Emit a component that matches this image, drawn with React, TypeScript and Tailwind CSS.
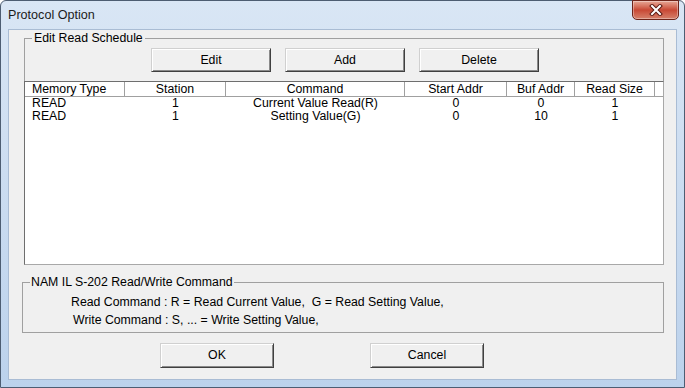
import React from 'react';

const cols = [
    { title: 'Memory Type', width: 'w-[100px]', align: 'text-left pl-[7px]' },
    { title: 'Station', width: 'w-[101px]', align: 'text-center' },
    { title: 'Command', width: 'w-[179px]', align: 'text-center' },
    { title: 'Start Addr', width: 'w-[102px]', align: 'text-center' },
    { title: 'Buf Addr', width: 'w-[68px]', align: 'text-center' },
    { title: 'Read Size', width: 'w-[80px]', align: 'text-center' },
];

const rows = [
    ['READ', '1', 'Current Value Read(R)', '0', '0', '1'],
    ['READ', '1', 'Setting Value(G)', '0', '10', '1'],
];

function Button({ label, className }: { label: string; className: string }) {
    return (
        <button
            type="button"
            className={`${className} flex items-center justify-center bg-[#f0f0f0] border border-t-[#d0d0d0] border-l-[#d0d0d0] border-r-[#404040] border-b-[#404040] shadow-[inset_1px_1px_0_#ffffff,inset_-1px_-1px_0_#8a8a8a] text-black`}
        >
            {label}
        </button>
    );
}

export default function App() {
    return (
        <div
            className="w-[685px] h-[388px] flex flex-col px-[7px] pb-[7px] bg-gradient-to-b from-[#d9e6f5] to-[#bcd2ec] border border-[#4d5d72] rounded-t-[6px] text-[12.3px] text-black"
            style={{ fontFamily: '"Liberation Sans", Arial, sans-serif' }}
        >
            {/* title bar */}
            <div className="h-[28px] flex items-start justify-between shrink-0">
                <span className="mt-[7px] text-[12.6px] leading-[15px] text-[#1b1b1b]">Protocol Option</span>
                <div className="w-[47px] h-[20px] -mt-px mr-[-2px] rounded-b-[5px] border border-[#6e2419] bg-gradient-to-b from-[#e6a796] via-[#c84834] to-[#d5806b] flex items-center justify-center shadow-[inset_0_0_0_1px_rgba(255,255,255,0.35)]">
                    <svg width="14" height="12" viewBox="0 0 14 12">
                        <path d="M3 2 L11 10 M11 2 L3 10" stroke="#5a1a12" strokeWidth="4" strokeLinecap="square" />
                        <path d="M3 2 L11 10 M11 2 L3 10" stroke="#ffffff" strokeWidth="2" strokeLinecap="square" />
                    </svg>
                </div>
            </div>

            {/* client area */}
            <div className="flex-1 flex flex-col bg-[#f0f0f0] border border-[#a9bcd4]">
                <fieldset className="mt-[1px] ml-[15px] mr-[12px] border border-[#a0a0a0]">
                    <legend className="ml-[7px] px-[2px] leading-[14px]">Edit Read Schedule</legend>
                    <div className="flex gap-[14px] ml-[126px] mt-[3px] h-[24px]">
                        <Button label="Edit" className="w-[120px] h-[24px]" />
                        <Button label="Add" className="w-[120px] h-[24px]" />
                        <Button label="Delete" className="w-[120px] h-[24px]" />
                    </div>
                    <div className="mt-[9px] -mx-px -mb-px h-[184px] bg-white border border-t-[#6e6e6e] border-l-[#6e6e6e] border-r-[#a8a8a8] border-b-[#a8a8a8]">
                        <div className="flex h-[15px] border-b border-[#a0a0a0] leading-[14px]">
                            {cols.map((c) => (
                                <div key={c.title} className={`${c.width} ${c.align} border-r border-[#a0a0a0]`}>
                                    {c.title}
                                </div>
                            ))}
                        </div>
                        {rows.map((r, i) => (
                            <div key={i} className="flex h-[13px] leading-[13px]">
                                {r.map((v, j) => (
                                    <div key={j} className={`${cols[j].width} ${cols[j].align}`}>
                                        {v}
                                    </div>
                                ))}
                            </div>
                        ))}
                    </div>
                </fieldset>

                <fieldset className="mt-[10px] ml-[13px] mr-[12px] border border-[#a0a0a0] pb-[3px]">
                    <legend className="ml-[7px] px-[1px] leading-[14px]">NAM IL S-202 Read/Write Command</legend>
                    <div className="mt-[4px] ml-[48px] leading-[18px] whitespace-pre">Read Command : R = Read Current Value,  G = Read Setting Value,</div>
                    <div className="ml-[50px] leading-[18px] whitespace-pre">Write Command : S, ... = Write Setting Value,</div>
                </fieldset>

                <div className="flex gap-[96px] ml-[151px] mt-[10px]">
                    <Button label="OK" className="w-[114px] h-[25px]" />
                    <Button label="Cancel" className="w-[114px] h-[25px]" />
                </div>
            </div>
        </div>
    );
}
